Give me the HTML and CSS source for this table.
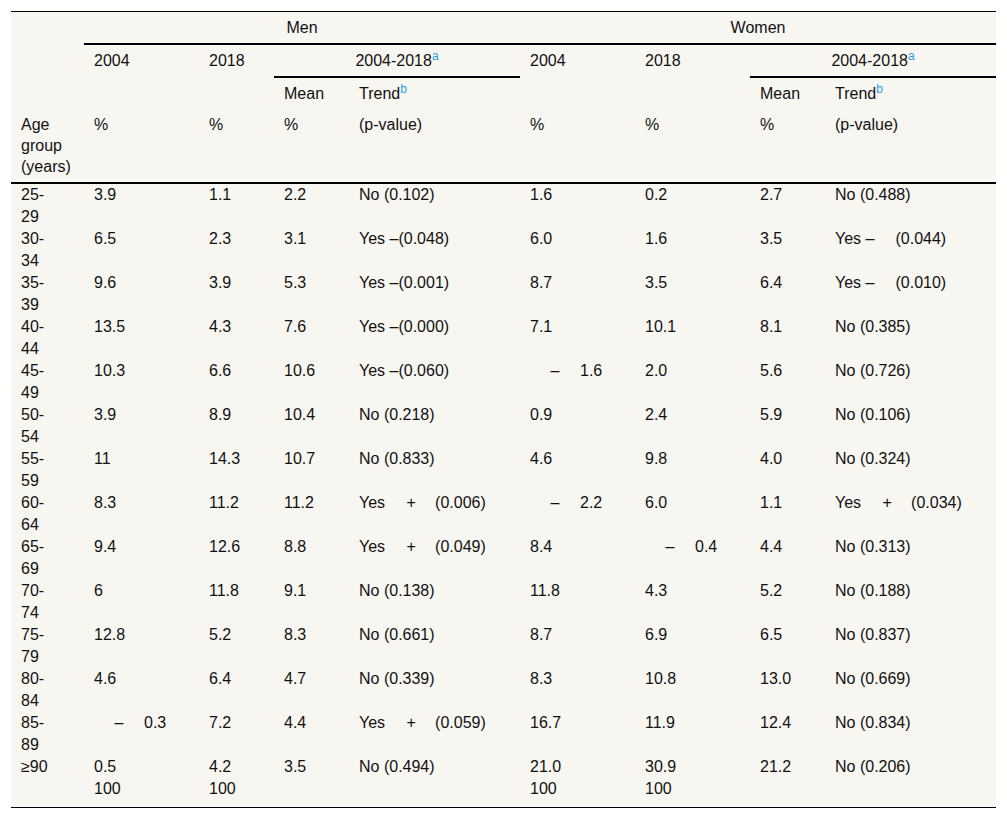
FILE: index.html
```html
<!DOCTYPE html>
<html lang="en">
<head>
<meta charset="utf-8">
<title>Prevalence by age group</title>
<link rel="stylesheet" href="styles.css">
</head>
<body>
<div class="page">
<table class="tbl">
  <colgroup>
    <col class="c-age">
    <col class="c-wide">
    <col class="c-narrow">
    <col class="c-narrow">
    <col class="c-trend">
    <col class="c-wide">
    <col class="c-wide">
    <col class="c-narrow">
    <col class="c-trend">
  </colgroup>
  <thead>
    <tr>
      <th></th>
      <th colspan="4" class="grp">Men</th>
      <th colspan="4" class="grp">Women</th>
    </tr>
    <tr>
      <th></th>
      <th>2004</th>
      <th>2018</th>
      <th colspan="2" class="grp">2004-2018<sup class="note">a</sup></th>
      <th>2004</th>
      <th>2018</th>
      <th colspan="2" class="grp">2004-2018<sup class="note">a</sup></th>
    </tr>
    <tr>
      <th></th>
      <th></th>
      <th></th>
      <th>Mean</th>
      <th>Trend<sup class="note">b</sup></th>
      <th></th>
      <th></th>
      <th>Mean</th>
      <th>Trend<sup class="note">b</sup></th>
    </tr>
    <tr class="units">
      <th>Age group (years)</th>
      <th>%</th>
      <th>%</th>
      <th>%</th>
      <th>(p-value)</th>
      <th>%</th>
      <th>%</th>
      <th>%</th>
      <th>(p-value)</th>
    </tr>
  </thead>
  <tbody>
    <tr><td>25-<br>29</td><td>3.9</td><td>1.1</td><td>2.2</td><td>No (0.102)</td><td>1.6</td><td>0.2</td><td>2.7</td><td>No (0.488)</td></tr>
    <tr><td>30-<br>34</td><td>6.5</td><td>2.3</td><td>3.1</td><td>Yes –(0.048)</td><td>6.0</td><td>1.6</td><td>3.5</td><td>Yes –<span class="gap"></span>(0.044)</td></tr>
    <tr><td>35-<br>39</td><td>9.6</td><td>3.9</td><td>5.3</td><td>Yes –(0.001)</td><td>8.7</td><td>3.5</td><td>6.4</td><td>Yes –<span class="gap"></span>(0.010)</td></tr>
    <tr><td>40-<br>44</td><td>13.5</td><td>4.3</td><td>7.6</td><td>Yes –(0.000)</td><td>7.1</td><td>10.1</td><td>8.1</td><td>No (0.385)</td></tr>
    <tr><td>45-<br>49</td><td>10.3</td><td>6.6</td><td>10.6</td><td>Yes –(0.060)</td><td><span class="neg">–</span>1.6</td><td>2.0</td><td>5.6</td><td>No (0.726)</td></tr>
    <tr><td>50-<br>54</td><td>3.9</td><td>8.9</td><td>10.4</td><td>No (0.218)</td><td>0.9</td><td>2.4</td><td>5.9</td><td>No (0.106)</td></tr>
    <tr><td>55-<br>59</td><td>11</td><td>14.3</td><td>10.7</td><td>No (0.833)</td><td>4.6</td><td>9.8</td><td>4.0</td><td>No (0.324)</td></tr>
    <tr><td>60-<br>64</td><td>8.3</td><td>11.2</td><td>11.2</td><td>Yes<span class="op">+</span>(0.006)</td><td><span class="neg">–</span>2.2</td><td>6.0</td><td>1.1</td><td>Yes<span class="op">+</span>(0.034)</td></tr>
    <tr><td>65-<br>69</td><td>9.4</td><td>12.6</td><td>8.8</td><td>Yes<span class="op">+</span>(0.049)</td><td>8.4</td><td><span class="neg">–</span>0.4</td><td>4.4</td><td>No (0.313)</td></tr>
    <tr><td>70-<br>74</td><td>6</td><td>11.8</td><td>9.1</td><td>No (0.138)</td><td>11.8</td><td>4.3</td><td>5.2</td><td>No (0.188)</td></tr>
    <tr><td>75-<br>79</td><td>12.8</td><td>5.2</td><td>8.3</td><td>No (0.661)</td><td>8.7</td><td>6.9</td><td>6.5</td><td>No (0.837)</td></tr>
    <tr><td>80-<br>84</td><td>4.6</td><td>6.4</td><td>4.7</td><td>No (0.339)</td><td>8.3</td><td>10.8</td><td>13.0</td><td>No (0.669)</td></tr>
    <tr><td>85-<br>89</td><td><span class="neg">–</span>0.3</td><td>7.2</td><td>4.4</td><td>Yes<span class="op">+</span>(0.059)</td><td>16.7</td><td>11.9</td><td>12.4</td><td>No (0.834)</td></tr>
    <tr><td>≥90</td><td>0.5<br>100</td><td>4.2<br>100</td><td>3.5</td><td>No (0.494)</td><td>21.0<br>100</td><td>30.9<br>100</td><td>21.2</td><td>No (0.206)</td></tr>
  </tbody>
</table>
</div>
</body>
</html>
```

FILE: styles.css
```css
html, body {
  margin: 0;
  padding: 0;
  background: #ffffff;
}

body {
  font-family: "Liberation Sans", Arial, Helvetica, sans-serif;
  font-size: 16px;
  color: #111111;
}

.page {
  padding: 11px;
}

.tbl {
  border-collapse: separate;
  border-spacing: 0;
  table-layout: fixed;
  width: 985px;
  background: #f8f6f1;
  border-top: 1px solid #000000;
  border-bottom: 1px solid #000000;
}

.c-age { width: 73px; }
.c-wide { width: 115px; }
.c-narrow { width: 75px; }
.c-trend { width: 171px; }

.tbl th,
.tbl td {
  padding: 0 10px;
  text-align: left;
  vertical-align: top;
  font-weight: normal;
  white-space: nowrap;
}

.tbl thead th {
  padding: 5px 10px;
  line-height: 21px;
}

.tbl thead .units th {
  white-space: normal;
  border-bottom: 2px solid #000000;
}

.tbl thead th.grp {
  text-align: center;
  border-bottom: 2px solid #000000;
}

.tbl tbody td {
  line-height: 22px;
}

.tbl tbody tr:last-child td {
  padding-bottom: 7px;
}

.note {
  font-size: 12px;
  line-height: 0;
  vertical-align: 6px;
  color: #27a2e4;
}

.op {
  display: inline-block;
  width: 50px;
  padding-left: 2px;
  box-sizing: border-box;
  text-align: center;
}

.neg {
  display: inline-block;
  width: 50px;
  text-align: center;
}

.gap {
  display: inline-block;
  width: 21px;
}
```
